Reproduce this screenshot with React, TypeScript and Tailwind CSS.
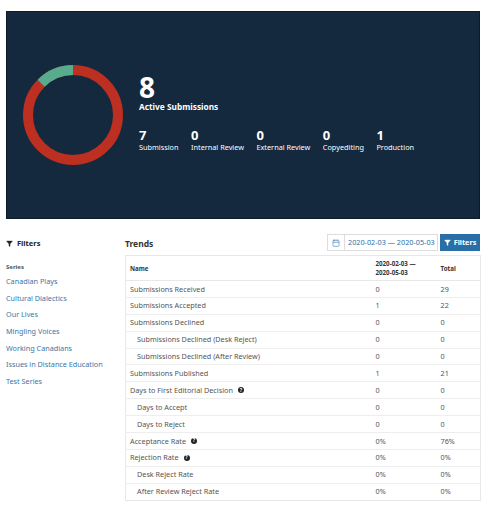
import React from 'react'
import { Calendar, Filter } from 'lucide-react'

const STAGES = [
  { count: 7, label: 'Submission' },
  { count: 0, label: 'Internal Review' },
  { count: 0, label: 'External Review' },
  { count: 0, label: 'Copyediting' },
  { count: 1, label: 'Production' },
]

const SERIES = [
  'Canadian Plays',
  'Cultural Dialectics',
  'Our Lives',
  'Mingling Voices',
  'Working Canadians',
  'Issues in Distance Education',
  'Test Series',
]

const ROWS = [
  { name: 'Submissions Received', range: '0', total: '29' },
  { name: 'Submissions Accepted', range: '1', total: '22' },
  { name: 'Submissions Declined', range: '0', total: '0' },
  { name: 'Submissions Declined (Desk Reject)', range: '0', total: '0', sub: true },
  { name: 'Submissions Declined (After Review)', range: '0', total: '0', sub: true },
  { name: 'Submissions Published', range: '1', total: '21' },
  { name: 'Days to First Editorial Decision', range: '0', total: '0', help: true },
  { name: 'Days to Accept', range: '0', total: '0', sub: true },
  { name: 'Days to Reject', range: '0', total: '0', sub: true },
  { name: 'Acceptance Rate', range: '0%', total: '76%', help: true },
  { name: 'Rejection Rate', range: '0%', total: '0%', help: true },
  { name: 'Desk Reject Rate', range: '0%', total: '0%', sub: true },
  { name: 'After Review Reject Rate', range: '0%', total: '0%', sub: true },
]

function HelpIcon() {
  return (
    <span className="ml-[5px] inline-flex h-[6px] w-[6px] items-center justify-center rounded-full bg-[#222] text-[5px] leading-none font-bold text-white">
      ?
    </span>
  )
}

function Donut() {
  return (
    <svg width="102" height="102" viewBox="0 0 102 102" className="shrink-0">
      <circle cx="51" cy="51" r="45" fill="none" stroke="#bd2f20" strokeWidth="10" />
      <path d="M51 6 A45 45 0 0 0 19.18 19.18" fill="none" stroke="#58ac8e" strokeWidth="10" />
    </svg>
  )
}

export default function App() {
  return (
    <div className="h-[512px] w-[491px] overflow-hidden bg-white pt-[11px] font-['Noto_Sans',sans-serif] text-[7.25px] text-[#555]">
      {/* Summary panel */}
      <div className="ml-[6px] flex h-[208px] w-[474px] items-center border border-[#0c1a2b] bg-[#14293d] pl-[15px] text-white">
        <Donut />
        <div className="ml-[15px] -mt-[5px]">
          <div className="text-[28px] leading-[27px] font-bold">8</div>
          <div className="text-[8.3px] leading-[12px] font-bold">Active Submissions</div>
          <div className="mt-[15px] flex gap-[12.5px]">
            {STAGES.map((stage) => (
              <div key={stage.label}>
                <div className="text-[13px] leading-[14px] font-bold">{stage.count}</div>
                <div className="text-[7.3px] leading-[10px]">{stage.label}</div>
              </div>
            ))}
          </div>
        </div>
      </div>

      <div className="mt-[19px] flex">
        {/* Sidebar */}
        <div className="w-[125px] pl-[6px]">
          <div className="flex h-[11px] items-center gap-[4px] text-[7.5px] font-bold text-[#222]">
            <Filter size={7} fill="#222" strokeWidth={1} />
            Filters
          </div>
          <div className="mt-[13px] text-[6px] leading-[10px] font-bold text-[#555]">Series</div>
          <div className="mt-[1px]">
            {SERIES.map((name) => (
              <div key={name} className="h-[16.7px] text-[7.25px] leading-[16.7px] text-[#3a76a8]">
                {name}
              </div>
            ))}
          </div>
        </div>

        {/* Trends table */}
        <div className="w-[356px]">
          <div className="-mt-[4px] flex h-[21px] items-start justify-between">
            <div className="mt-[4px] text-[8.5px] leading-[12px] font-bold text-[#333]">Trends</div>
            <div className="flex pr-[1px]">
              <div className="flex h-[17px] w-[111px] items-center border border-[#ddd] text-[7.25px] text-[#2a6ea8]">
                <div className="flex h-full w-[17px] items-center justify-center border-r border-[#ddd]">
                  <Calendar size={8} color="#5b8db8" />
                </div>
                <div className="pl-[3px] whitespace-nowrap">2020-02-03 — 2020-05-03</div>
              </div>
              <div className="ml-[2px] flex h-[17px] w-[40px] items-center justify-center gap-[3px] bg-[#2a6ea8] text-[7.25px] font-bold text-white">
                <Filter size={7} fill="#fff" strokeWidth={1} />
                Filters
              </div>
            </div>
          </div>

          <table className="w-full table-fixed border border-[#e8e8e8] text-[7.25px]">
            <thead>
              <tr className="h-[25px] border-b border-[#e8e8e8] text-left text-[6.2px] leading-[9px] text-[#333]">
                <th className="w-[250px] pl-[4px] font-bold">Name</th>
                <th className="w-[65px] font-bold">
                  2020-02-03 —
                  <br />
                  2020-05-03
                </th>
                <th className="font-bold">Total</th>
              </tr>
            </thead>
            <tbody>
              {ROWS.map((row) => (
                <tr key={row.name} className="h-[16.9px] border-b border-[#eee] last:border-b-0">
                  <td className={row.sub ? 'pl-[11px]' : 'pl-[4px]'}>
                    <span className="inline-flex items-center whitespace-nowrap">
                      {row.name}
                      {row.help && <HelpIcon />}
                    </span>
                  </td>
                  <td>{row.range}</td>
                  <td>{row.total}</td>
                </tr>
              ))}
            </tbody>
          </table>
        </div>
      </div>
    </div>
  )
}
